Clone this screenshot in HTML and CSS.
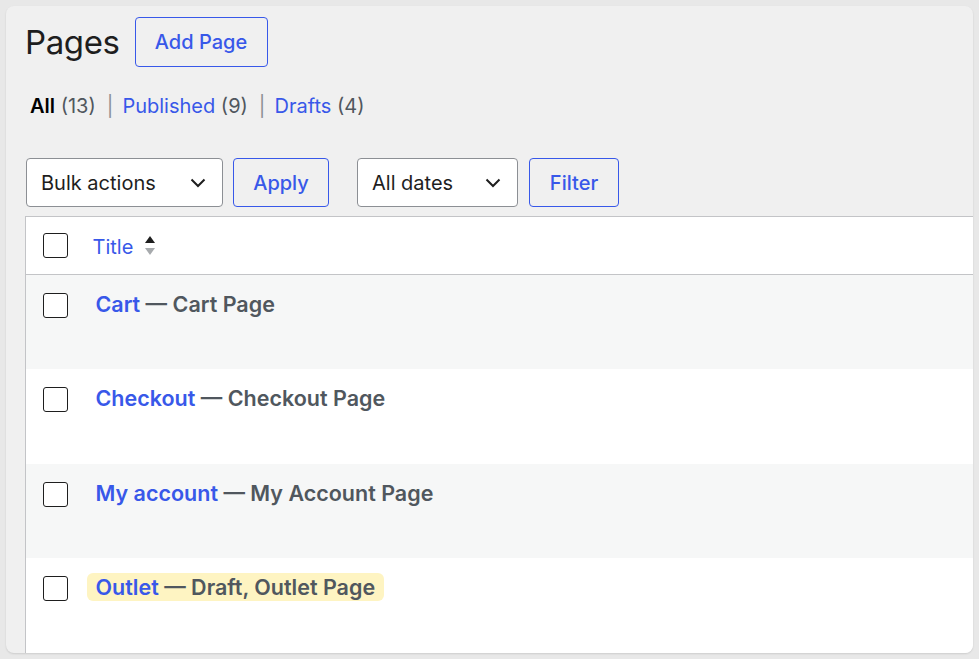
FILE: index.html
```html
<!DOCTYPE html>
<html lang="en">
<head>
  <meta charset="UTF-8" />
  <meta name="viewport" content="width=device-width, initial-scale=1.0"/>
  <title>Pages</title>
  <link rel="stylesheet" href="styles.css">
</head>
<body>

  <div class="wrap">
    <div class="page-header">
      <h1>Pages</h1>
      <a class="btn" href="#">Add Page</a>
    </div>

    <ul class="subsubsub">
      <li><span class="current">All</span> <span class="count">(13)</span></li>
      <li class="sep">|</li>
      <li><a href="#">Published</a> <span class="count">(9)</span></li>
      <li class="sep">|</li>
      <li><a href="#">Drafts</a> <span class="count">(4)</span></li>
    </ul>

    <div class="tablenav">
      <div class="select select--bulk">
        <span>Bulk actions</span>
        <svg width="16" height="10" viewBox="0 0 16 10"><path d="M1.5 1.5 L8 8 L14.5 1.5" fill="none" stroke="#1e1e1e" stroke-width="2"/></svg>
      </div>
      <a class="btn btn--small" href="#">Apply</a>
      <div class="select select--dates">
        <span>All dates</span>
        <svg width="16" height="10" viewBox="0 0 16 10"><path d="M1.5 1.5 L8 8 L14.5 1.5" fill="none" stroke="#1e1e1e" stroke-width="2"/></svg>
      </div>
      <a class="btn btn--small btn--filter" href="#">Filter</a>
    </div>

    <table class="list-table">
      <thead>
        <tr>
          <th class="check-col"><span class="checkbox"></span></th>
          <th class="title-col">
            <a href="#">Title</a>
            <svg class="sort" width="12" height="24" viewBox="0 0 12 24"><path d="M1 9 L6 2 L11 9 Z" fill="#1e1e1e"/><path d="M1 14 L6 21 L11 14 Z" fill="#a7aaad"/></svg>
          </th>
        </tr>
      </thead>
      <tbody>
        <tr class="alt">
          <td class="check-col"><span class="checkbox"></span></td>
          <td class="title-col"><strong><a href="#">Cart</a> — Cart Page</strong></td>
        </tr>
        <tr>
          <td class="check-col"><span class="checkbox"></span></td>
          <td class="title-col"><strong><a href="#">Checkout</a> — Checkout Page</strong></td>
        </tr>
        <tr class="alt">
          <td class="check-col"><span class="checkbox"></span></td>
          <td class="title-col"><strong><a href="#">My account</a> — My Account Page</strong></td>
        </tr>
        <tr>
          <td class="check-col"><span class="checkbox"></span></td>
          <td class="title-col"><strong class="highlight"><a href="#">Outlet</a> — Draft, Outlet Page</strong></td>
        </tr>
      </tbody>
    </table>
  </div>

</body>
</html>
```

FILE: styles.css
```css
body {
  font-family: Inter, 'Noto Sans', sans-serif;
  background: #e8e8e8;
  margin: 0;
  padding: 6px;
  color: #1e1e1e;
}

a {
  color: #3858e9;
  text-decoration: none;
}

.wrap {
  height: 647px;
  width: 967px;
  box-sizing: border-box;
  background: #f0f0f0;
  border-radius: 8px;
  box-shadow: 0 1px 2px rgba(0,0,0,0.12);
  padding: 11px 0 0 19px;
  overflow: hidden;
}

.page-header {
  display: flex;
  align-items: center;
  gap: 15px;
  height: 50px;
}

h1 {
  margin: 0;
  font-size: 33px;
  font-weight: 400;
  line-height: 50px;
  letter-spacing: -0.4px;
}

.btn {
  display: inline-flex;
  align-items: center;
  justify-content: center;
  box-sizing: border-box;
  height: 50px;
  width: 133px;
  border: 1.5px solid #3858e9;
  border-radius: 4px;
  font-size: 20px;
  font-weight: 500;
}

.subsubsub {
  list-style: none;
  display: flex;
  margin: 25px 0 0 5px;
  padding: 0;
  font-size: 20px;
  line-height: 28px;
}

.subsubsub .current {
  font-weight: 600;
  color: #000;
}

.subsubsub .count {
  color: #50575e;
}

.subsubsub .sep {
  color: #8c8f94;
  margin: 0 9px 0 11px;
}

.tablenav {
  display: flex;
  align-items: center;
  margin-top: 38px;
  height: 49px;
}

.select {
  display: flex;
  align-items: center;
  justify-content: space-between;
  box-sizing: border-box;
  height: 49px;
  padding: 0 16px 0 14px;
  background: #fff;
  border: 1.5px solid #8c8f94;
  border-radius: 4px;
  font-size: 20px;
}

.select--bulk {
  width: 197px;
  margin-left: 1px;
}

.select--dates {
  width: 161px;
  margin-left: 28px;
}

.btn--small {
  height: 49px;
  width: 96px;
  margin-left: 10px;
}

.btn--filter {
  width: 90px;
  margin-left: 11px;
}

.list-table {
  margin-top: 9px;
  width: calc(100% + 20px);
  border-collapse: collapse;
  background: #fff;
  border: 1px solid #c3c4c7;
  border-bottom: none;
}

.list-table th,
.list-table td {
  padding: 0;
  text-align: left;
  font-weight: 400;
  font-size: 20px;
  line-height: 28px;
}

.list-table thead tr {
  height: 58px;
  border-bottom: 1px solid #c3c4c7;
}

.list-table thead .check-col {
  padding-left: 17px;
  vertical-align: middle;
}

.list-table thead .title-col {
  vertical-align: middle;
  padding-top: 2px;
}

.title-col .sort {
  vertical-align: -4px;
  margin-left: 5px;
}

.check-col {
  width: 67px;
  box-sizing: border-box;
}

.checkbox {
  display: block;
  width: 25px;
  height: 25px;
  box-sizing: border-box;
  border: 1.5px solid #1e1e1e;
  border-radius: 3px;
  background: #fff;
}

.list-table tbody tr {
  height: 94px;
}

.list-table tbody tr:nth-child(2),
.list-table tbody tr:last-child {
  height: 95px;
}

.list-table tbody tr.alt {
  background: #f6f7f7;
}

.list-table tbody td {
  vertical-align: top;
}

.list-table tbody .check-col {
  padding: 18px 0 0 17px;
}

.list-table tbody .title-col {
  padding: 15px 0 0 3px;
}

.title-col strong {
  font-weight: 600;
  font-size: 21.5px;
  letter-spacing: 0;
  color: #50575e;
}

.highlight {
  display: inline-block;
  margin-left: -9px;
  padding: 0 9px;
  background: #fef4c2;
  border-radius: 6px;
}
```
